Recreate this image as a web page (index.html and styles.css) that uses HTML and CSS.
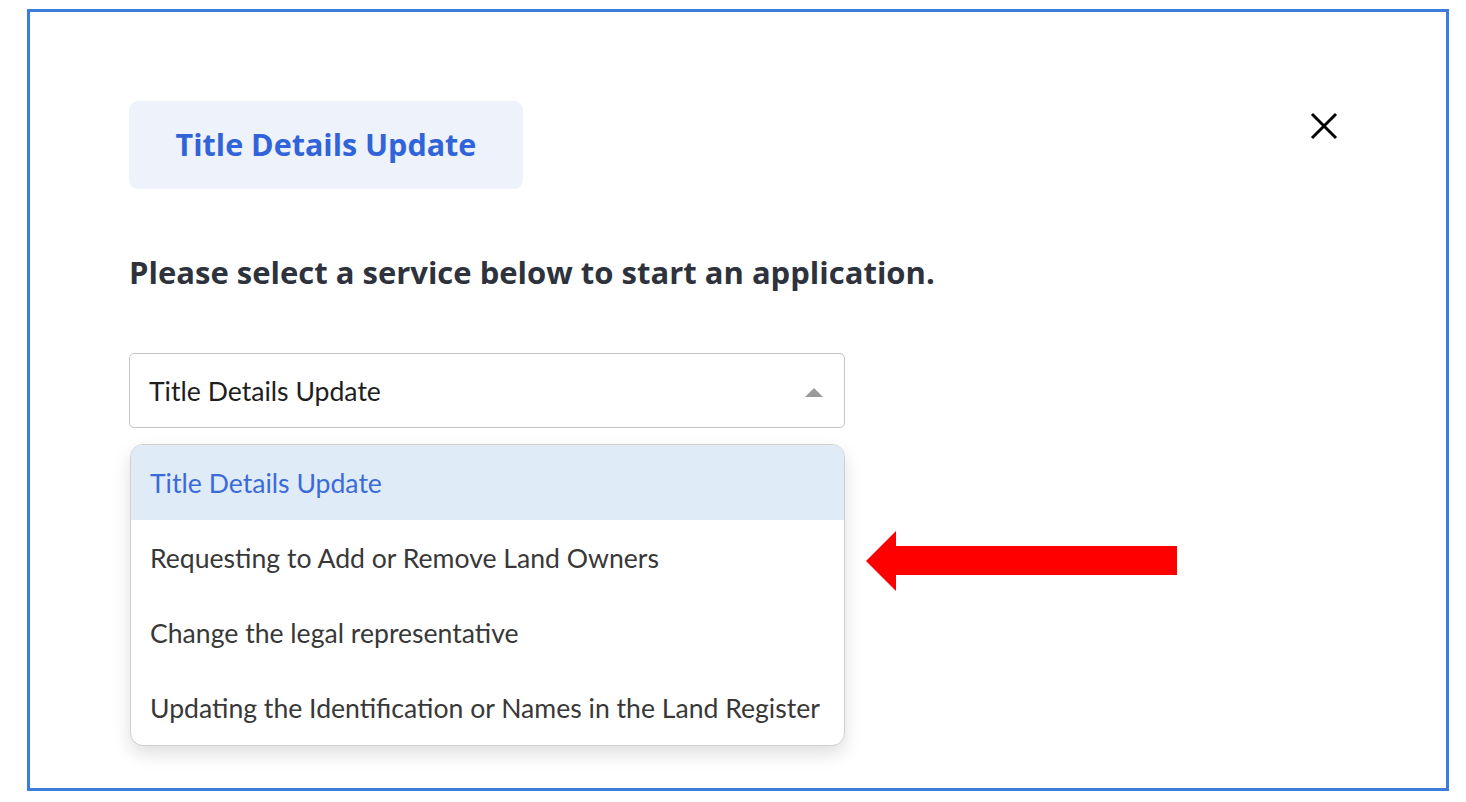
FILE: index.html
```html
<!DOCTYPE html>
<html lang="en">
<head>
<meta charset="utf-8">
<title>Title Details Update</title>
<link rel="stylesheet" href="styles.css">
</head>
<body>
<div class="frame">
  <div class="header">
    <div class="chip">Title Details Update</div>
    <button class="close" aria-label="Close">
      <svg width="28" height="28" viewBox="0 0 28 28"><path d="M2 2 L26 26 M26 2 L2 26" stroke="#000" stroke-width="3" fill="none"/></svg>
    </button>
  </div>
  <h2 class="prompt">Please select a service below to start an application.</h2>
  <div class="select-wrap">
    <div class="select">
      <span>Title Details Update</span>
      <span class="caret"></span>
    </div>
    <ul class="menu">
      <li class="option active">Title Details Update</li>
      <li class="option">Requesting to Add or Remove Land Owners</li>
      <li class="option">Change the legal representative</li>
      <li class="option">Updating the Identification or Names in the Land Register</li>
    </ul>
  </div>
  <svg class="annot-arrow" width="312" height="62" viewBox="0 0 312 62">
    <polygon points="0,30 30,0 30,15 311,15 311,44 30,44 30,60" fill="#ff0000"/>
  </svg>
</div>
</body>
</html>
```
FILE: styles.css
```css
html, body {
  margin: 0;
  padding: 0;
  background: #ffffff;
}
body {
  padding: 9px 0 0 27px;
  font-family: Lato, "Noto Sans", sans-serif;
}
.frame {
  position: relative;
  box-sizing: border-box;
  width: 1422px;
  height: 782px;
  border: 3px solid #3b7ddd;
  padding: 89px 108px 0 99px;
}
.header {
  display: flex;
  justify-content: space-between;
  align-items: flex-start;
}
.chip {
  box-sizing: border-box;
  width: 394px;
  height: 88px;
  border-radius: 9px;
  background: #eef2fb;
  color: #3064d8;
  font-family: "Open Sans", "Noto Sans", sans-serif;
  font-weight: 700;
  font-size: 30.5px;
  padding-bottom: 3px;
  display: flex;
  align-items: center;
  justify-content: center;
}
.close {
  margin-top: 11px;
  padding: 0;
  border: 0;
  background: none;
  width: 28px;
  height: 28px;
  display: flex;
}
.prompt {
  margin: 63px 0 0 0;
  font-family: "Open Sans", "Noto Sans", sans-serif;
  font-size: 31px;
  font-weight: 700;
  color: #2d323c;
  line-height: 40px;
}
.select-wrap {
  margin-top: 61px;
  width: 716px;
}
.select {
  box-sizing: border-box;
  height: 75px;
  border: 1px solid #c4c4c4;
  border-radius: 5px;
  padding: 0 20px 0 19px;
  display: flex;
  align-items: center;
  justify-content: space-between;
  font-size: 26.6px;
  color: #1e1e1e;
}
.caret {
  width: 0;
  height: 0;
  border-left: 9px solid transparent;
  border-right: 9px solid transparent;
  border-bottom: 9px solid #9a9a9a;
  margin-right: 1px;
  margin-top: 4px;
}
.menu {
  list-style: none;
  margin: 16px 0 0 1px;
  padding: 0;
  box-sizing: border-box;
  width: 715px;
  border: 1px solid #cfcfcf;
  border-radius: 13px;
  overflow: hidden;
  box-shadow: 0 8px 18px rgba(0, 0, 0, 0.13);
  background: #fff;
}
.option {
  height: 75px;
  padding-left: 19px;
  display: flex;
  align-items: center;
  font-size: 26.6px;
  color: #383838;
}
.option.active {
  background: #e0ebf8;
  color: #3b6bd9;
}
.annot-arrow {
  position: absolute;
  left: 836px;
  top: 519px;
}
```
